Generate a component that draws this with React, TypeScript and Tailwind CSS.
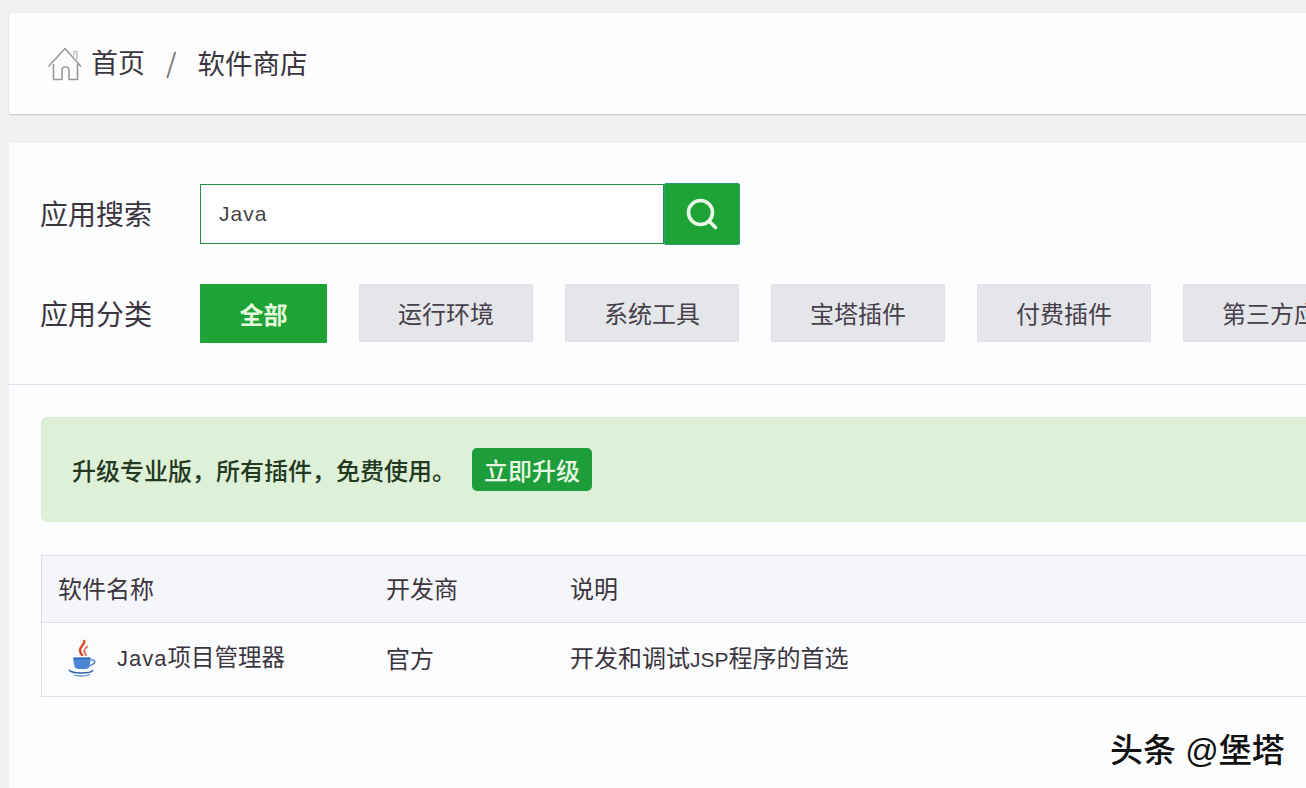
import { Search } from "lucide-react"

const cjk = "font-['Noto_Sans_CJK_SC','Liberation_Sans',sans-serif]"
const latin = "font-['Liberation_Sans',sans-serif]"

const categories = ["运行环境", "系统工具", "宝塔插件", "付费插件", "第三方应用"]

function HomeIcon() {
  return (
    <svg viewBox="0 0 36 36" className="w-[36px] h-[36px] shrink-0" fill="none" stroke="#9a98a0" strokeWidth="1.6">
      <path d="M1.5 20.5 18 2.5l16 18" strokeLinejoin="round" />
      <path d="M27 9.5V5.5h3v8" stroke="#c4c3c8" />
      <path d="M6.5 18v15.5h8.5V24c0-4 7-4 7 0v9.5h8.5V18" strokeLinejoin="round" />
    </svg>
  )
}

function JavaIcon() {
  return (
    <svg viewBox="0 0 32 38" className="w-[32px] h-[38px] shrink-0" fill="none">
      <path d="M17 1c2 4-5 7-4 11 .4 2 2 4 2.500 5" stroke="#d9472b" strokeWidth="2.400" />
      <path d="M21 7c-3 2-5 4-3 7 .8 1.200 1 2 .5 3" stroke="#e2735c" strokeWidth="2" />
      <path d="M6 18.500h18l-1.500 9c-.4 1.500-2 2.500-4 2.500h-7c-2 0-3.600-1-4-2.500z" fill="#4c86d6" />
      <path d="M7 19.500h16" stroke="#2f62ae" strokeWidth="1.500" />
      <path d="M24 21c4-1 5 2.500 1.500 4.500-1 .6-2 1-3 1.200" stroke="#3b71bf" strokeWidth="1.300" />
      <path d="M2 31c2 2.500 6 3 12 3 6 0 11-.5 12-3" stroke="#2f62ae" strokeWidth="1.600" />
      <path d="M7 36c4 1.200 11 1.200 16-.5" stroke="#4c86d6" strokeWidth="1.300" />
    </svg>
  )
}

export default function App() {
  return (
    <div className={`relative h-[788px] w-[1306px] overflow-hidden bg-[#f0f1f3] pl-[9px] pt-[13px] text-[#3b3540] ${cjk}`}>
      <div className="w-[1400px]">
        <div className="flex h-[101px] items-center rounded-[2px] bg-[#fdfdfe] pl-[38px] shadow-[0_1px_2px_rgba(120,125,140,0.4)]">
          <HomeIcon />
          <span className="ml-[8px] pb-[2px] text-[27px]">首页</span>
          <span className="ml-[21px] pb-[2px] text-[27px] text-[#77757c]">/</span>
          <span className="ml-[21px] pb-[2px] text-[27.500px]">软件商店</span>
        </div>

        <div className="mt-[29px] h-[700px] bg-[#fcfdfe]">
          <div className="border-b border-[#dfe2ea] pb-[41px] pl-[31px] pt-[40px]">
            <div className="flex items-center">
              <div className="w-[160px] pb-[2px] text-[28px]">应用搜索</div>
              <div className="flex items-center">
                <div className={`flex h-[60px] w-[464px] items-center border border-[#2a8a4a] bg-white pl-[18px] text-[21px] tracking-[1px] text-[#444] ${latin}`}>
                  Java
                </div>
                <button className="flex h-[62px] w-[76px] items-center justify-center rounded-[2px] border border-[#2a9a80] bg-[#1ea336] text-[#e8f8e8]">
                  <Search size={36} strokeWidth={2.4} />
                </button>
              </div>
            </div>
            <div className="mt-[39px] flex items-center">
              <div className="w-[160px] pb-[2px] text-[28px]">应用分类</div>
              <div className="flex gap-[32px]">
                <button className="h-[59px] w-[127px] rounded-[1px] bg-[#1ea336] text-[24px] font-bold text-[#e4f9dd]">全部</button>
                {categories.map((name) => (
                  <button key={name} className="h-[58px] shrink-0 whitespace-nowrap rounded-[1px] border border-[#e0e1e4] bg-[#e5e6e9] px-[38px] text-[24px] text-[#45404a]">
                    {name}
                  </button>
                ))}
              </div>
            </div>
          </div>

          <div className="pl-[32px] pt-[32px]">
            <div className="flex h-[105px] items-center rounded-[6px] border border-[#d9ecd2] bg-[#dff0d8] pl-[30px]">
              <span className="text-[24px] font-medium text-[#24391f]">升级专业版，所有插件，免费使用。</span>
              <button className="ml-[16px] h-[43px] w-[120px] rounded-[5px] bg-[#1e9e3a] text-[24px] font-medium text-[#e8f8e4]">立即升级</button>
            </div>

            <div className="mt-[33px] border border-[#dcdfe6] text-[24px]">
              <div className="flex h-[67px] items-center border-b border-[#dcdfe6] bg-[#f5f6f9] pb-[2px]">
                <div className="w-[344px] pl-[16px]">软件名称</div>
                <div className="w-[184px]">开发商</div>
                <div>说明</div>
              </div>
              <div className="flex h-[73px] items-center bg-[#fbfcfe] pb-[4px]">
                <div className="flex w-[344px] items-center pl-[25px]">
                  <JavaIcon />
                  <span className="ml-[18px] -translate-y-[1px] text-[23.500px]">
                    <span className={`text-[22px] tracking-[1px] ${latin}`}>Java</span>项目管理器
                  </span>
                </div>
                <div className="w-[184px]">官方</div>
                <div>
                  开发和调试<span className={`text-[21px] ${latin}`}>JSP</span>程序的首选
                </div>
              </div>
            </div>
          </div>
        </div>
      </div>

      <div className="absolute left-[1110px] top-[724px] text-[33px] font-medium text-[#111]">
        头条<span className={latin}> @</span>堡塔
      </div>
    </div>
  )
}
